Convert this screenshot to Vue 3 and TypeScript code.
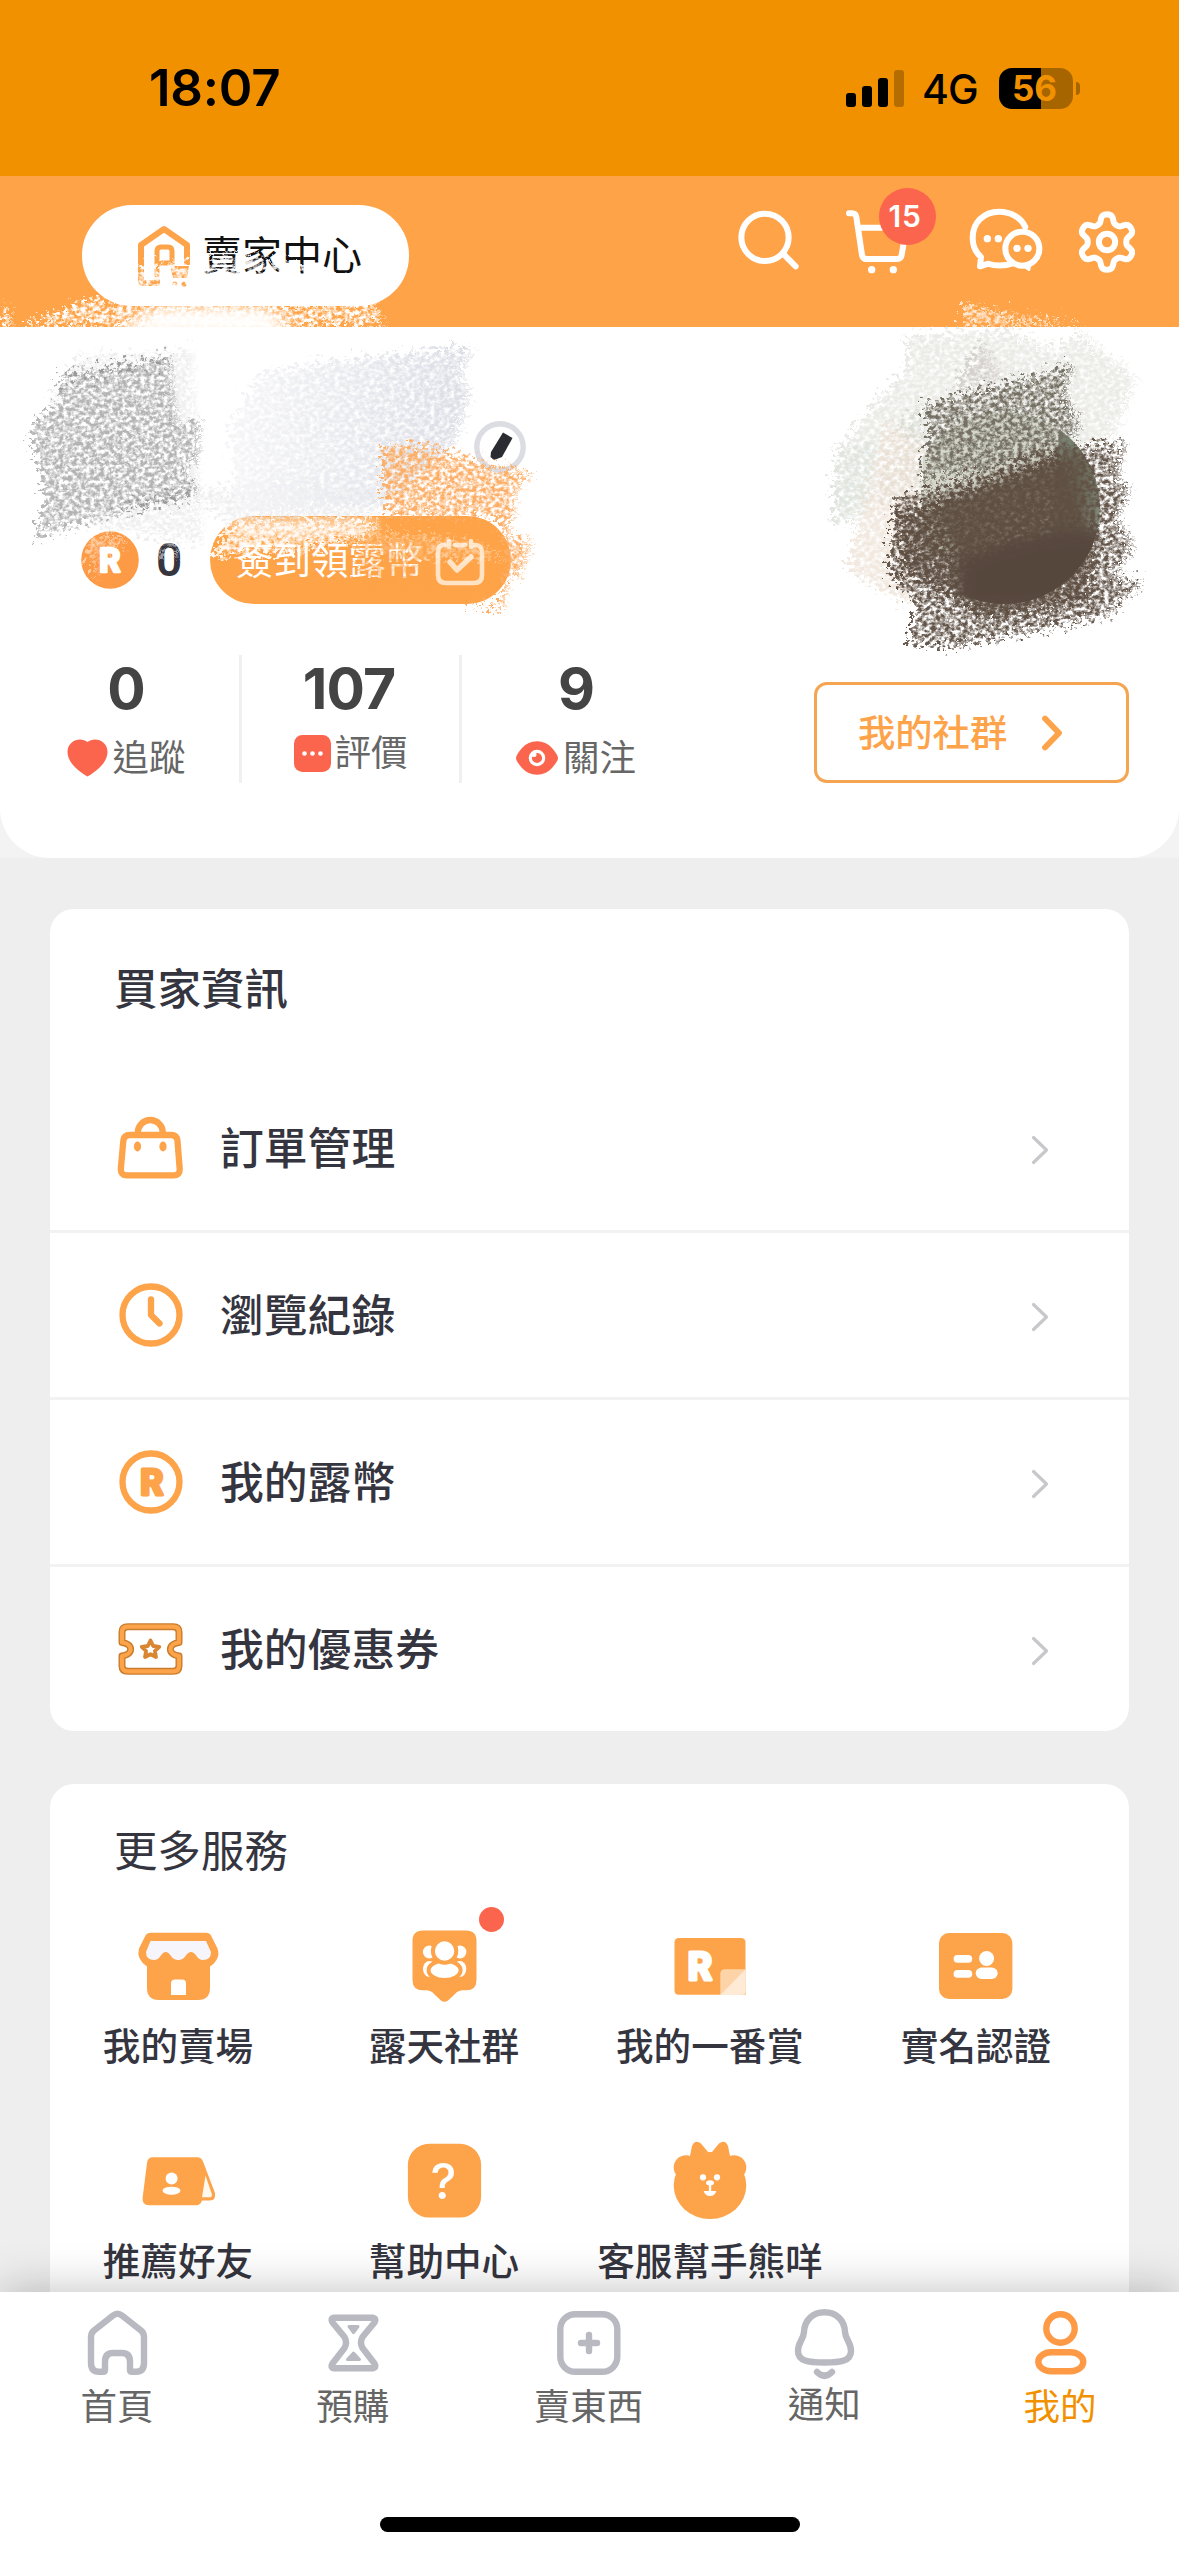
<script setup lang="ts">
interface Stat { value: string; label: string; icon: 'heart' | 'comment' | 'eye' }
interface Row { label: string; icon: 'bag' | 'clock' | 'coin' | 'ticket' }
interface Service { label: string; icon: string; dot?: boolean }
interface Tab { label: string; icon: string; active?: boolean }

const stats: Stat[] = [
  { value: '0', label: '追蹤', icon: 'heart' },
  { value: '107', label: '評價', icon: 'comment' },
  { value: '9', label: '關注', icon: 'eye' },
]
const rows: Row[] = [
  { label: '訂單管理', icon: 'bag' },
  { label: '瀏覽紀錄', icon: 'clock' },
  { label: '我的露幣', icon: 'coin' },
  { label: '我的優惠券', icon: 'ticket' },
]
const services: Service[] = [
  { label: '我的賣場', icon: 'store' },
  { label: '露天社群', icon: 'community', dot: true },
  { label: '我的一番賞', icon: 'lottery' },
  { label: '實名認證', icon: 'identity' },
  { label: '推薦好友', icon: 'refer' },
  { label: '幫助中心', icon: 'help' },
  { label: '客服幫手熊咩', icon: 'bear' },
]
const tabs: Tab[] = [
  { label: '首頁', icon: 'home' },
  { label: '預購', icon: 'hourglass' },
  { label: '賣東西', icon: 'plus' },
  { label: '通知', icon: 'bell' },
  { label: '我的', icon: 'me', active: true },
]

// Six-lobed gear outline
function gearPath(cx: number, cy: number): string {
  const pts: string[] = []
  for (let i = 0; i < 180; i++) {
    const a = (i / 180) * Math.PI * 2
    const wave = Math.tanh(1.7 * Math.cos(6 * a)) / Math.tanh(1.7)
    const r = 70.5 + 12.5 * wave
    pts.push(`${(cx + r * Math.sin(a)).toFixed(1)} ${(cy - r * Math.cos(a)).toFixed(1)}`)
  }
  return `M${pts.join('L')}Z`
}
const gear = gearPath(1220, 217)
</script>

<template>
  <div class="screen">
    <div class="status">
      <span class="time">18:07</span>
      <svg class="signal" width="58" height="37" viewBox="0 0 58 37">
        <rect x="0" y="23" width="10" height="14" rx="3" />
        <rect x="16" y="16" width="10" height="21" rx="3" />
        <rect x="32" y="8" width="10" height="29" rx="3" />
        <rect x="48" y="0" width="10" height="37" rx="3" opacity=".25" />
      </svg>
      <span class="net">4G</span>
      <div class="battery"><span><b>5</b><i>6</i></span></div>
      <div class="nub"></div>
    </div>

    <header class="topbar">
      <button class="seller">
        <svg width="54" height="64" viewBox="137 223 54 64" fill="none" stroke="#fda34a" stroke-width="6">
          <path d="M160 282H144Q141 282 141 279V244L164 228L187 244V264" stroke-linejoin="round" />
          <path d="M157 282V250Q157 246 161 246H168Q172 246 172 250V262H157" stroke-width="5" />
          <path d="M170 265H189L187 277H173Z" fill="#fda34a" stroke="none" />
          <circle cx="175" cy="283" r="2.6" fill="#fda34a" stroke="none" />
          <circle cx="184" cy="283" r="2.6" fill="#fda34a" stroke="none" />
        </svg>
        <span>賣家中心</span>
      </button>
      <div class="actions">
        <svg width="62" height="66.7" viewBox="115 115 186 200" class="line">
          <circle cx="196" cy="203" r="71" /><path d="M250 252L288 290" />
        </svg>
        <div class="cart">
          <svg width="64" height="66.7" viewBox="435 115 192 200" class="line">
            <path d="M447 131H456Q467 131 469 142L486 256Q488 268 499 268H592Q603 268 605 256L619 174H480" />
            <circle cx="515" cy="300" r="11" class="dot" /><circle cx="580" cy="300" r="11" class="dot" />
          </svg>
          <span class="badge">15</span>
        </div>
        <svg width="74" height="66.7" viewBox="807 115 222 200" class="line">
          <path d="M976 172C963 144 933 126 897 126C850 126 818 160 818 205C818 230 828 249 843 262L840 290L865 282C885 290 915 289 935 282" />
          <circle cx="967" cy="237" r="51" /><path d="M968 288L987 300L991 282" stroke-width="10" class="tail" />
          <circle cx="862" cy="207" r="11" class="dot" /><circle cx="895" cy="207" r="11" class="dot" />
          <circle cx="951" cy="236" r="11" class="dot" /><circle cx="984" cy="236" r="11" class="dot" />
        </svg>
        <svg width="60" height="66.7" viewBox="1130 115 180 200" class="line">
          <path :d="gear" /><circle cx="1220" cy="217" r="24.5" />
        </svg>
      </div>
    </header>

    <div class="profile-wrap">
      <section class="profile">
        <div class="name-row">
          <svg class="edit" width="52" height="52" viewBox="0 0 52 52">
            <circle cx="26" cy="26" r="23.2" fill="#fff" stroke="#dcdde2" stroke-width="5.4" />
            <path d="M29 11.500L38.500 17L28 36L20 39L16.500 36L17 31Z" fill="#2b2c31" />
          </svg>
        </div>
        <div class="coin-row">
          <svg width="58" height="58" viewBox="0 0 58 58">
            <circle cx="29" cy="29" r="28.800" fill="#fd9a45" />
            <text x="29" y="41" class="r-mark" font-size="33" fill="#fff" stroke="#fff" stroke-width="2.500" stroke-linejoin="round">R</text>
          </svg>
          <span class="coins">0</span>
          <button class="checkin">
            <span>簽到領露幣</span>
            <svg width="50" height="50" viewBox="0 0 50 50" fill="none" stroke="#ffe3c4" stroke-width="4.6" stroke-linecap="round" stroke-linejoin="round">
              <path d="M10 8H8Q3 9 3 15V38Q3 46 11 46H39Q47 46 47 38V15Q47 9 41 8H39M20 8H30M14 4V10M36 4V10" />
              <path d="M15 25L22 33L36 20" stroke-width="5.5" />
            </svg>
          </button>
        </div>
        <div class="stats-row">
          <div v-for="s in stats" :key="s.label" class="stat" :class="s.icon">
            <strong>{{ s.value }}</strong>
            <div class="stat-label">
              <svg v-if="s.icon === 'heart'" width="41" height="38" viewBox="0 0 41 38">
                <path d="M20.5 37.5C17 35.5 .5 26 .5 13C.5 1 14-2.5 20.5 3C27-2.5 40.500 1 40.500 13C40.500 26 24 35.500 20.500 37.500Z" fill="#fb654d" />
              </svg>
              <svg v-else-if="s.icon === 'comment'" width="37" height="37" viewBox="0 0 37 37">
                <rect width="37" height="37" rx="8.500" fill="#fb654d" />
                <g fill="#fff"><circle cx="10.500" cy="18.500" r="2.300" /><circle cx="18.500" cy="18.500" r="2.300" /><circle cx="26.500" cy="18.500" r="2.300" /></g>
              </svg>
              <svg v-else width="42" height="34" viewBox="0 0 42 34">
                <path d="M21 .3Q30 .3 36 7Q42 14 42 17T36 27Q30 33.700 21 33.700T6 27Q0 20 0 17T6 7Q12 .3 21 .3Z" fill="#fb654d" />
                <circle cx="21" cy="17" r="6.700" fill="none" stroke="#fff" stroke-width="3.200" />
                <circle cx="18" cy="13.500" r="2.500" fill="#fff" />
              </svg>
              <span>{{ s.label }}</span>
            </div>
          </div>
          <button class="group">
            <span>我的社群</span>
            <svg width="22" height="36" viewBox="0 0 22 36" fill="none" stroke="#fda34a" stroke-width="5.800" stroke-linecap="round" stroke-linejoin="round"><path d="M4 3.500L18 18L4 32.500" /></svg>
          </button>
        </div>
      </section>
    </div>

    <section class="card buyer">
      <h2>買家資訊</h2>
      <div v-for="r in rows" :key="r.label" class="row">
        <svg width="72" height="72" viewBox="0 0 72 72" fill="none" stroke="#fda34a" stroke-width="6.300" stroke-linejoin="round" stroke-linecap="round">
          <template v-if="r.icon === 'bag'">
            <path d="M22.800 22V20.500A12.500 12.500 0 0 1 47.800 20.500V22M15 23H56Q62 23 62.500 29L64.700 57Q65 63.300 58.500 63.300H12Q5.600 63.300 5.800 57L8.300 29Q8.800 23 15 23Z" />
            <g fill="#fda34a" stroke="none"><ellipse cx="22.500" cy="34.500" rx="3.600" ry="4.900" /><ellipse cx="48" cy="34.500" rx="3.600" ry="4.900" /></g>
          </template>
          <template v-else-if="r.icon === 'clock'">
            <circle cx="36" cy="36" r="28.500" /><path d="M36 20.500V36L44.500 44.500" />
          </template>
          <template v-else-if="r.icon === 'coin'">
            <circle cx="36" cy="36" r="28.500" />
            <text x="37" y="49" class="r-mark" font-size="36" fill="#fda34a" stroke="#fda34a" stroke-width="3">R</text>
          </template>
          <template v-else>
            <g v-for="(p, i) in [['#c97d2c', 7], ['#fda34a', 4.200]]" :key="i" :stroke="p[0]" :stroke-width="p[1]">
              <path d="M13 13.700H58Q64 13.700 64 19V29.500C52.500 31 52.500 41.500 64 43V53Q64 58.300 58 58.300H13Q7 58.300 7 53V43C18.500 41.500 18.500 31 7 29.500V19Q7 13.700 13 13.700Z" />
            </g>
            <path d="M35.500 27.500L38.200 33L44.300 33.800L39.900 38L41 44L35.500 41.200L30 44L31.100 38L26.700 33.800L32.800 33Z" stroke="#d98632" stroke-width="3.800" />
          </template>
        </svg>
        <span>{{ r.label }}</span>
        <svg class="chev" width="18" height="30" viewBox="0 0 18 30" fill="none" stroke="#c8c8cc" stroke-width="3.200" stroke-linecap="round" stroke-linejoin="round"><path d="M2.500 2.500L15.500 15L2.500 27.500" /></svg>
      </div>
    </section>

    <section class="card more">
      <h2>更多服務</h2>
      <div class="grid">
        <div v-for="s in services" :key="s.label" class="service">
          <div class="icon-box">
            <svg width="84" height="84" viewBox="0 0 84 84" fill="#fda34a">
              <template v-if="s.icon === 'store'">
                <path d="M15 8.700H70Q73.500 8.700 75 11.500L81.500 24.500Q85 35 74 42.500V64Q74 76 62 76H23Q11 76 11 64V42.500Q0 35 3 24.500L9.500 11.500Q11 8.700 15 8.700Z" />
                <path d="M14.500 17H70L75 28Q75 36 67 36Q63 36 60.500 32Q55 24 49.500 32Q47 36 42.300 36Q37.500 36 35 32Q29.700 24 24.500 32Q22 36 18 36Q10 36 10 28Z" fill="#f5f5fb" />
                <path d="M35 71V59.500Q35 55.500 39 55.500H46Q50 55.500 50 59.500V71Z" fill="#fff" />
              </template>
              <template v-else-if="s.icon === 'community'">
                <path d="M21 6.500H64Q74.500 6.500 74.500 17V56Q74.500 66.300 64 66.300H61Q56 66.300 53 70L46 76.500Q42.500 79 39 76.500L32 70Q29 66.300 24 66.300H21Q10.500 66.300 10.500 56V17Q10.500 6.500 21 6.500Z" />
                <g fill="#fff">
                  <circle cx="27.300" cy="28" r="6.400" /><circle cx="58" cy="28" r="6.400" />
                  <ellipse cx="27.500" cy="45" rx="6.500" ry="8" /><ellipse cx="57.800" cy="45" rx="6.500" ry="8" />
                </g>
                <g fill="#fff" stroke="#fda34a" stroke-width="4">
                  <ellipse cx="42.600" cy="46.300" rx="16" ry="9.700" /><circle cx="42.600" cy="27" r="11.700" />
                </g>
              </template>
              <template v-else-if="s.icon === 'lottery'">
                <path d="M11 14H73Q77.500 14 77.500 18.500V70.700H11Q6.500 70.700 6.500 66.200V18.500Q6.500 14 11 14Z" />
                <path d="M52.300 71V50Q52.300 45.300 57 45.300H77.700V71Z" fill="#fdd3a8" />
                <path d="M52.300 71L77.700 45.300V66Q77.700 71 72.700 71Z" fill="#feead5" />
                <text x="32" y="55.500" class="r-mark" font-size="38" fill="#fff" stroke="#fff" stroke-width="3">R</text>
              </template>
              <template v-else-if="s.icon === 'identity'">
                <rect x="5" y="9" width="73.400" height="66" rx="10" />
                <g fill="#fff">
                  <rect x="19.600" y="31" width="18.600" height="7.700" rx="3.800" /><rect x="19.600" y="46" width="18.600" height="7.700" rx="3.800" />
                  <circle cx="52.600" cy="34.500" r="7.500" /><rect x="41.700" y="43.500" width="22" height="11.500" rx="6" />
                </g>
              </template>
              <template v-else-if="s.icon === 'refer'">
                <path d="M17 18.200H61Q65.500 18.200 67 22.500L79 54Q80 61.500 74 61.500H66Q64.500 66.200 60 66.200H13Q6 66.200 6.600 59L11 24Q11.500 18.200 17 18.200Z" />
                <path d="M69.500 36.500L75.800 55Q76.200 58.300 74 58.300H66Z" fill="#fff8ee" />
                <g fill="#fff"><circle cx="35.600" cy="39.500" r="6" /><ellipse cx="35.500" cy="51.700" rx="9" ry="4" /></g>
              </template>
              <template v-else-if="s.icon === 'help'">
                <rect x="5.900" y="4.800" width="73.200" height="73.700" rx="21" />
                <text x="41.500" y="60" class="q-mark" font-size="49" fill="#fff">?</text>
              </template>
              <template v-else>
                <ellipse cx="42" cy="46.500" rx="36.300" ry="33.500" /><circle cx="18" cy="28.500" r="12.300" /><circle cx="66" cy="28.500" r="12.300" />
                <path d="M21 22L24 7Q27 0 33 4.500L40 13Q42 15 44 13L51 4.500Q57 0 60 7L63 22Z" />
                <g fill="#fff">
                  <circle cx="35" cy="38.300" r="3.100" /><circle cx="49" cy="38.300" r="3.100" />
                  <ellipse cx="42" cy="43.800" rx="4" ry="2.600" /><rect x="40.900" y="44" width="2.300" height="10" />
                  <path d="M35.700 52H48.300Q47 57 42 57T35.700 52Z" />
                </g>
              </template>
            </svg>
            <i v-if="s.dot" class="reddot"></i>
          </div>
          <span>{{ s.label }}</span>
        </div>
      </div>
    </section>

    <nav class="tabbar">
      <div class="tabs">
        <div v-for="t in tabs" :key="t.label" class="tab" :class="[t.icon, { active: t.active }]">
          <svg width="72" height="76" viewBox="0 0 72 76" fill="none" stroke="currentColor" stroke-width="6.400" stroke-linecap="round" stroke-linejoin="round">
            <path v-if="t.icon === 'home'" d="M31 10.500Q35.500 7 40 10.500L59 25.500Q62 28 62 32V58Q62 66.800 54 66.800H50Q48 66.800 48 65V57Q48 48 40 48H31Q23 48 23 57V65Q23 66.800 21 66.800H17Q9 66.800 9 58V32Q9 28 12 25.500Z" />
            <template v-else-if="t.icon === 'hourglass'">
              <path d="M16 12.700H54.500Q59 13.500 56.500 17.500L44.500 32Q41.500 37.500 44.500 43L56.500 58.500Q59 62.500 54.500 63.300H16Q12 62.500 14.500 58.500L26.500 43Q29.500 37.500 26.500 32L14.500 17.500Q12 13.500 16 12.700Z" />
              <path d="M31 21.500H40L35.500 27.500ZM35.500 48L41.500 54.500H29.500Z" fill="currentColor" stroke-width="3" />
            </template>
            <template v-else-if="t.icon === 'plus'">
              <rect x="7.300" y="9.200" width="57" height="57.600" rx="15" /><path d="M36 30V46M28 38H44" />
            </template>
            <template v-else-if="t.icon === 'bell'">
              <path d="M35.500 7.300C24 7.300 15.500 15 15 27C14.500 35 9 37 9 46C9 56 19 57.500 35.500 57.500C52 57.500 62 56 62 46C62 37 56.500 35 56 27C55.500 15 47 7.300 35.500 7.300Z" />
              <path d="M28 67Q35.500 74.500 43 67" />
            </template>
            <template v-else>
              <circle cx="35.500" cy="23.500" r="14.200" /><rect x="13.300" y="47.300" width="45" height="19" rx="13" ry="9.500" />
            </template>
          </svg>
          <span>{{ t.label }}</span>
        </div>
      </div>
      <div class="home-bar"></div>
    </nav>

    <!-- Chalk strokes hiding the account name and avatar -->
    <svg class="chalk" width="1179" height="680" viewBox="0 0 1179 680">
      <defs>
        <filter id="grain" x="-10%" y="-10%" width="120%" height="120%">
          <feTurbulence type="fractalNoise" baseFrequency=".22 .26" numOctaves="4" seed="4" result="n" />
          <feColorMatrix in="n" type="matrix" values="0 0 0 0 0  0 0 0 0 0  0 0 0 0 0  3 0 0 0 -.950" result="a" />
          <feDisplacementMap in="SourceGraphic" in2="n" scale="36" xChannelSelector="R" yChannelSelector="G" result="d" />
          <feComposite in="d" in2="a" operator="in" />
        </filter>
        <filter id="dense" x="-10%" y="-10%" width="120%" height="120%">
          <feTurbulence type="fractalNoise" baseFrequency=".2 .26" numOctaves="4" seed="9" result="n" />
          <feColorMatrix in="n" type="matrix" values="0 0 0 0 0  0 0 0 0 0  0 0 0 0 0  2.500 0 0 0 -.550" result="a" />
          <feDisplacementMap in="SourceGraphic" in2="n" scale="36" xChannelSelector="R" yChannelSelector="G" result="d" />
          <feComposite in="d" in2="a" operator="in" />
        </filter>
        <filter id="soft" x="-20%" y="-20%" width="140%" height="140%"><feGaussianBlur stdDeviation="7" /></filter>
        <clipPath id="face"><circle cx="1004" cy="508" r="96" /></clipPath>
        <clipPath id="bar"><rect x="0" y="306" width="1179" height="21" /></clipPath>
        <linearGradient id="lav" x1="0" x2="1"><stop offset="0" stop-color="#f6f6f8" /><stop offset=".5" stop-color="#e9eaef" /><stop offset="1" stop-color="#dcdde5" /></linearGradient>
      </defs>

      <g filter="url(#grain)" fill="#fff">
        <path d="M22 327L98 296L110 303H376L388 327Z" />
        <path d="M0 304L12 312V330H0Z" />
        <path d="M964 303L1000 312L1088 327H964Z" opacity=".75" />
      </g>
      <path d="M110 335L140 316L165 308H265L300 335Z" fill="#fff" filter="url(#soft)" clip-path="url(#bar)" />
      <path d="M135 268L230 254L300 262L345 276V292H135Z" fill="#fff" opacity=".9" filter="url(#grain)" />

      <g filter="url(#grain)">
        <path d="M80 356L195 350L205 545L60 520L50 400Z" fill="#e4e4e4" opacity=".6" />
        <path d="M62 375L172 355L180 424L203 420L200 460L188 470L199 490L36 538L46 500L32 427L60 400Z" fill="#adadad" opacity=".9" />
        <path d="M195 490L300 480L400 500L360 520L230 524Z" fill="#e4e4e6" opacity=".6" />
        <path d="M70 374L172 356L174 364L66 385ZM120 505L197 484L197 497L128 512Z" fill="#999" />
      </g>
      <path d="M260 375L318 363L475 347L463 372L472 397L452 450L383 505L240 512L230 430Z" fill="url(#lav)" filter="url(#dense)" />
      <path d="M383 447L429 445L497 466L536 472L518 488L517 513L508 535L534 542L520 578L510 580L504 611L463 604H500L510 560L500 517H390L383 480Z" fill="#fdae66" filter="url(#grain)" />
      <path d="M213 550L235 522L380 520L370 536L300 552L215 558Z" fill="#fff" opacity=".9" filter="url(#dense)" />
      <path d="M225 520H380L370 530L235 534Z" fill="#fff" opacity=".7" filter="url(#soft)" />
      <path d="M360 528L470 540L508 560L420 560L350 545Z" fill="#fff" opacity=".4" filter="url(#grain)" />
      <path d="M84 548L100 533L132 540L120 548L100 552L98 580Z" fill="#fff" opacity=".5" filter="url(#grain)" />
      <path d="M358 540H430V590H358Z" fill="#fda34a" opacity=".6" filter="url(#grain)" />
      <path d="M154 542H184V560H154Z" fill="#fff" opacity=".5" filter="url(#grain)" />

      <g filter="url(#dense)">
        <path d="M907 337L1007 330L1057 350L1080 333L1138 378L1113 440L923 505L890 500L833 523L840 450L867 413L910 367Z" fill="#e3e4de" opacity=".75" />
        <path d="M900 425L925 405L930 500L915 510L880 500Z" fill="#dcded6" />
        <path d="M835 452L880 440L870 515L835 525Z" fill="#dbe3dc" opacity=".7" />
        <path d="M887 420L925 447L914 606L847 570Z" fill="#ece0d4" opacity=".75" />
        <path d="M982 340L1008 380L955 390Z" fill="#cfcac5" opacity=".8" />
      </g>
      <path d="M923 430L1070 390L1100 500L923 560Z" fill="#d5d7cc" clip-path="url(#face)" />
      <path d="M1060 420H1110V560H1050Z" fill="#687562" clip-path="url(#face)" opacity=".85" />
      <path d="M923 405L1075 365L1066 395L1082 423L1068 452L923 480L930 430Z" fill="#756f63" filter="url(#grain)" />
      <path d="M895 500L1047 447L1128 442L1118 477L1132 490L1118 517L1135 547L1115 575L1144 582L1108 617L957 647L910 644L918 605L890 573Z" fill="#65564b" filter="url(#grain)" />
      <path d="M900 515L1065 455L1085 530L1100 530L1090 600L990 620L905 570Z" fill="#5f4f42" filter="url(#dense)" />
      <g clip-path="url(#face)">
        <path d="M930 510L1085 448L1090 540L1110 560V610H960L950 540Z" fill="#5f4f42" opacity=".75" filter="url(#soft)" />
        <path d="M960 560Q1050 520 1110 536V610H960Z" fill="#56473c" filter="url(#soft)" />
      </g>
    </svg>
  </div>
</template>

<style>
html, body { margin: 0; background: #eee; }
</style>

<style scoped>
.screen {
  position: relative;
  display: flex;
  flex-direction: column;
  width: 1179px;
  height: 2556px;
  overflow: hidden;
  background: #eee;
  color: #35353f;
  font-family: Inter, "Noto Sans CJK TC", sans-serif;
}
svg { display: block; flex: none; overflow: visible; }
button { border: 0; padding: 0; margin: 0; background: none; font: inherit; color: inherit; display: flex; align-items: center; box-sizing: border-box; }
span { white-space: nowrap; }

.status { height: 176px; flex: none; display: flex; align-items: center; background: #f29100; color: #000; box-sizing: border-box; padding-left: 149px; }
.time { width: 697px; font-size: 51px; font-weight: 600; line-height: 60px; letter-spacing: -.2px; }
.signal { margin-right: 20px; }
.net { width: 75px; font-size: 41px; font-weight: 500; line-height: 50px; letter-spacing: -1px; padding-top: 2px; box-sizing: border-box; margin-left: -2px; margin-right: 2px; }
.battery { width: 74px; height: 41px; border-radius: 13px; background: linear-gradient(90deg, #000 42px, #a76500 42px); display: flex; align-items: center; justify-content: center; font-size: 35px; font-weight: 700; color: #f29100; }
.battery span { margin-right: 3px; }
.battery b, .battery i { font-style: normal; font-weight: 700; }
.nub { width: 4px; height: 13px; margin-left: 3px; border-radius: 0 4px 4px 0; background: #a76500; }

.topbar { height: 151px; flex: none; display: flex; align-items: flex-start; justify-content: space-between; background: #fea347; padding: 29px 42px 0 82px; box-sizing: border-box; }
.seller { width: 327px; height: 101px; border-radius: 50px; background: #fff; padding-left: 55px; gap: 11px; font-size: 40px; color: #111; }
.seller span { margin-top: -5px; }
.actions { display: flex; margin-top: 3px; }
.line { fill: none; stroke: #fff; stroke-width: 18; stroke-linecap: round; stroke-linejoin: round; }
.line .dot { fill: #fff; stroke: none; }
.line .tail { fill: #fff; stroke-width: 8; }
.cart { position: relative; margin: 0 60px 0 45px; }
.actions > svg:last-child { margin-left: 34px; }
.badge { position: absolute; left: 34px; top: -20.500px; width: 57px; height: 57px; border-radius: 50%; box-sizing: border-box; padding-right: 5px; background: #fb654d; color: #fff; font-size: 30px; font-weight: 600; line-height: 57px; text-align: center; letter-spacing: .8px; }

.profile-wrap { flex: none; background: #f3f3f3; }
.profile { height: 531px; background: #fff; border-radius: 0 0 50px 50px; display: flex; flex-direction: column; }
.name-row { height: 189px; padding: 94px 0 0 474px; box-sizing: border-box; }
.coin-row { height: 88px; display: flex; align-items: center; padding-left: 81px; }
.coins { margin-left: 17px; width: 54px; font-family: Roboto, sans-serif; font-size: 46px; font-weight: 600; line-height: 60px; }
.checkin { width: 301px; height: 88px; border-radius: 44px; background: #fea347; color: #fff; padding: 0 26px; justify-content: space-between; font-size: 37.500px; }
.checkin span { margin-top: -5px; }
.checkin svg { margin-top: 4px; }
.stats-row { margin-top: 51px; height: 128px; display: flex; padding: 0 50px 0 13px; }
.stat { box-sizing: border-box; display: flex; flex-direction: column; align-items: center; width: 229px; border-right: 3px solid #f0f0f0; }
.stat.comment { width: 220px; }
.stat.eye { border: 0; width: 228px; }
.stat strong { font-size: 57px; font-weight: 700; line-height: 68px; color: #444; letter-spacing: -.8px; }
.stat.comment strong { margin-left: -3px; }
.stat-label { display: flex; align-items: center; gap: 5px; height: 48px; margin-top: 11px; font-size: 36.500px; color: #666; }
.stat-label span { margin-top: -5px; }
.stat.comment .stat-label { margin-top: 6px; gap: 4px; }
.group { width: 315px; height: 101px; align-self: flex-end; margin-left: auto; border: 3px solid #f5a552; border-radius: 13px; padding-left: 41px; color: #fda34a; font-size: 37.300px; font-weight: 500; gap: 34px; }
.group span { margin-top: -4px; }

.card { flex: none; width: 1079px; margin-left: 50px; background: #fff; border-radius: 24px; }
.card h2 { margin: 0; padding-left: 64px; font-size: 43.500px; line-height: 60px; }
.buyer { margin-top: 51px; }
.buyer h2 { height: 157px; line-height: 160px; font-weight: 500; }
.row { height: 164px; display: flex; align-items: center; padding: 0 80px 0 65px; border-bottom: 3px solid #f2f2f2; font-size: 43.800px; font-weight: 500; }
.row:last-child { border: 0; }
.row span { margin: -5px 0 0 33px; }
.chev { margin: 3px 0 0 auto; }
.r-mark { font-family: Roboto, sans-serif; font-weight: 800; text-anchor: middle; stroke-linejoin: round; }
.q-mark { font-family: Inter, sans-serif; font-weight: 500; text-anchor: middle; }

.more { margin-top: 53px; height: 900px; }
.more h2 { height: 140px; box-sizing: border-box; padding-top: 37px; font-weight: 400; }
.grid { display: grid; grid-template-columns: repeat(4, 256px); column-gap: 10px; grid-auto-rows: 214.500px; }
.service { display: flex; flex-direction: column; align-items: center; font-size: 37.600px; font-weight: 500; }
.service span { margin-top: 11px; line-height: 56px; }
.icon-box { position: relative; }
.reddot { position: absolute; left: 77px; top: -17.500px; width: 25px; height: 25px; border-radius: 50%; background: #fb654d; }

.tabbar { position: absolute; left: 0; right: 0; bottom: 0; height: 264px; background: #fff; box-shadow: 0 0 44px rgba(0, 0, 0, .26); display: flex; flex-direction: column; justify-content: space-between; align-items: center; }
.tabs { display: flex; width: 100%; padding-top: 13px; }
.tab { flex: 1; display: flex; flex-direction: column; align-items: center; color: #b9bac1; }
.tab span { margin: 1px 2px 0 0; font-size: 36.500px; line-height: 50px; color: #666; }
.tab.bell span { margin-top: -1px; }
.tab.active { color: #fe9a45; }
.tab.active span { color: #f29100; }
.home-bar { width: 420px; height: 15px; border-radius: 8px; background: #000; margin-bottom: 24px; }

.chalk { position: absolute; left: 0; top: 0; pointer-events: none; }
</style>
